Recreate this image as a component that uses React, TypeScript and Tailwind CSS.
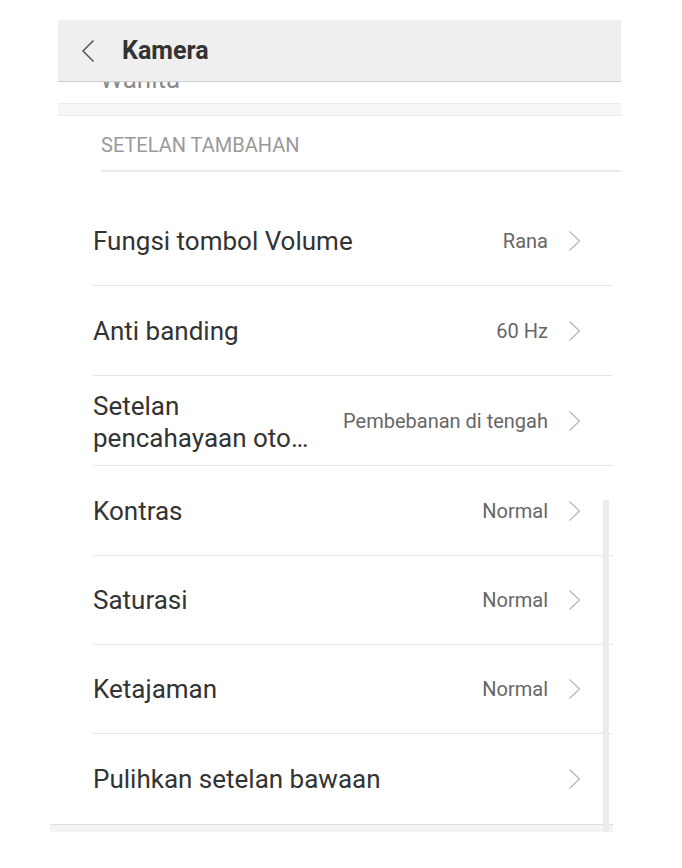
type Row = {
  label: string;
  value?: string;
  h: string;
  last?: boolean;
};

const rows: Row[] = [
  { label: "Fungsi tombol Volume", value: "Rana", h: "h-[90px]" },
  { label: "Anti banding", value: "60 Hz", h: "h-[90px]" },
  { label: "Setelan pencahayaan oto…", value: "Pembebanan di tengah", h: "h-[90px]" },
  { label: "Kontras", value: "Normal", h: "h-[90px]" },
  { label: "Saturasi", value: "Normal", h: "h-[89px]" },
  { label: "Ketajaman", value: "Normal", h: "h-[89px]" },
  { label: "Pulihkan setelan bawaan", h: "h-[90px]", last: true },
];

function Chevron() {
  return (
    <svg width="13" height="22" viewBox="0 0 13 22" fill="none" className="shrink-0">
      <polyline points="1.5,1.5 11.5,11 1.5,20.5" stroke="#b9b9b9" strokeWidth="1.3" />
    </svg>
  );
}

function BackArrow() {
  return (
    <svg width="14" height="24" viewBox="0 0 14 24" fill="none" className="shrink-0">
      <polyline points="12.5,1.5 2,12 12.5,22.5" stroke="#555555" strokeWidth="1.5" />
    </svg>
  );
}

function SettingRow({ row }: { row: Row }) {
  const twoLine = row.label.startsWith("Setelan ");
  return (
    <div className={`${row.h} flex items-center pr-[32px] ${row.last ? "" : "border-b border-[#e6e6e6]"}`}>
      {twoLine ? (
        <div className="w-[230px] text-[26px] leading-[32px] text-[#333333] pt-[2px]">
          <div>Setelan</div>
          <div>pencahayaan oto…</div>
        </div>
      ) : (
        <div className="text-[26px] leading-[30px] text-[#333333]">{row.label}</div>
      )}
      <div className="ml-auto flex items-center gap-[20px]">
        {row.value && <span className="text-[20px] text-[#666666]">{row.value}</span>}
        <Chevron />
      </div>
    </div>
  );
}

export default function App() {
  return (
    <div className="min-h-[868px] w-[682px] bg-white pt-[20px] font-['Roboto',_'Liberation_Sans',_sans-serif]">
      {/* top bar */}
      <div className="ml-[58px] w-[563px] h-[62px] bg-[#efefef] border-b border-[#cdcdcd] flex items-center">
        <div className="ml-[23px]">
          <BackArrow />
        </div>
        <span className="ml-[27px] text-[25px] font-bold text-[#333333]">Kamera</span>
      </div>

      <div className="ml-[58px] w-[563px]">
        {/* previous item, scrolled under the bar */}
        <div className="h-[21px] overflow-hidden pl-[42px]">
          <div className="-mt-[15px] text-[26px] leading-[24px] text-[#8a8a8a]">Wanita</div>
        </div>
        <div className="h-[13px] bg-[#f6f6f6] border-y border-[#ececec]" />
        <div className="ml-[43px] h-[56px] border-b-2 border-[#ebebeb] flex items-center pt-[3px]">
          <span className="text-[20px] text-[#9a9a9a]">SETELAN TAMBAHAN</span>
        </div>
      </div>

      <div className="relative ml-[50px] w-[563px] mt-[24px]">
        <div className="pl-[43px]">
          {rows.map((row) => (
            <SettingRow key={row.label} row={row} />
          ))}
        </div>
        <div className="h-[8px] bg-[#f4f4f4] border-t border-[#dedede]" />
        {/* scrollbar */}
        <div className="absolute left-[553px] top-[304px] bottom-0 w-[6px] bg-[#ececec]" />
      </div>
    </div>
  );
}
